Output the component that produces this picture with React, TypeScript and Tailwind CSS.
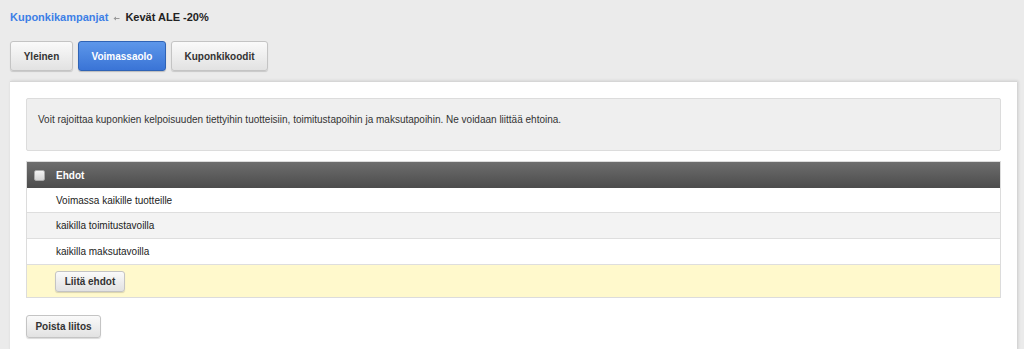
import React from "react";

const btn =
  "rounded-[3px] border border-[#c4c4c4] bg-gradient-to-b from-[#fafafa] to-[#e2e2e2] shadow-[0_1px_1px_rgba(0,0,0,0.15)] font-bold text-[10px] text-[#333]";

export default function App() {
  return (
    <div
      className="min-h-[349px] w-[1024px] overflow-hidden bg-[#ebebeb] text-[#222]"
      style={{ fontFamily: '"Liberation Sans", Arial, sans-serif' }}
    >
      <div className="flex items-center pl-[10px] pt-[8px] h-[27px] text-[11px] font-bold">
        <span className="text-[#3d7fe6]">Kuponkikampanjat</span>
        <svg className="mx-[5px] mt-[1px]" width="7" height="5" viewBox="0 0 7 5">
          <path d="M0.5 2.5 L3 0.5 L3 2 L6.5 2 L6.5 3 L3 3 L3 4.5 Z" fill="#999" />
        </svg>
        <span className="text-[#222]">Kevät ALE -20%</span>
      </div>
      <div className="flex gap-[5px] pl-[10px] pt-[14px]">
        <div className={`${btn} h-[30px] w-[63px] flex items-center justify-center`}>Yleinen</div>
        <div className="h-[30px] w-[88px] flex items-center justify-center rounded-[3px] border border-[#2f63b5] bg-gradient-to-b from-[#5d97ea] to-[#3a74d6] text-white font-bold text-[10px] shadow-[0_1px_1px_rgba(0,0,0,0.2)]">
          Voimassaolo
        </div>
        <div className={`${btn} h-[30px] w-[97px] flex items-center justify-center`}>Kuponkikoodit</div>
      </div>
      <div className="ml-[10px] mt-[10px] w-[1007px] h-[270px] bg-white border-t border-[#d6d6d6] shadow-[1px_0_3px_rgba(0,0,0,0.15)] px-[16px] pt-[16px]">
        <div className="h-[53px] rounded-[2px] border border-[#dcdcdc] bg-[#efefef] pl-[11px] pt-[13px] text-[10px] text-[#333]">
          Voit rajoittaa kuponkien kelpoisuuden tiettyihin tuotteisiin, toimitustapoihin ja maksutapoihin. Ne voidaan liittää ehtoina.
        </div>
        <div className="mt-[10px] border border-[#dcdcdc] text-[10px] text-[#222]">
          <div className="flex items-center h-[26px] bg-gradient-to-b from-[#6e6e6e] to-[#4c4c4c] text-white font-bold">
            <span className="ml-[7px] inline-block h-[11px] w-[11px] rounded-[2px] border border-[#aaa] bg-gradient-to-b from-[#f4f4f4] to-[#d4d4d4]" />
            <span className="ml-[11px]">Ehdot</span>
          </div>
          <div className="flex items-center h-[25px] pl-[29px] bg-white border-b border-[#dedede]">Voimassa kaikille tuotteille</div>
          <div className="flex items-center h-[26px] pl-[29px] bg-[#f3f3f3] border-b border-[#dedede]">kaikilla toimitustavoilla</div>
          <div className="flex items-center h-[26px] pl-[29px] bg-white border-b border-[#dedede]">kaikilla maksutavoilla</div>
          <div className="flex items-center h-[32px] pl-[28px] bg-[#fff9cc]">
            <div className={`${btn} h-[21px] w-[70px] flex items-center justify-center`}>Liitä ehdot</div>
          </div>
        </div>
        <div className={`${btn} mt-[17px] h-[23px] w-[75px] flex items-center justify-center`}>Poista liitos</div>
      </div>
    </div>
  );
}
